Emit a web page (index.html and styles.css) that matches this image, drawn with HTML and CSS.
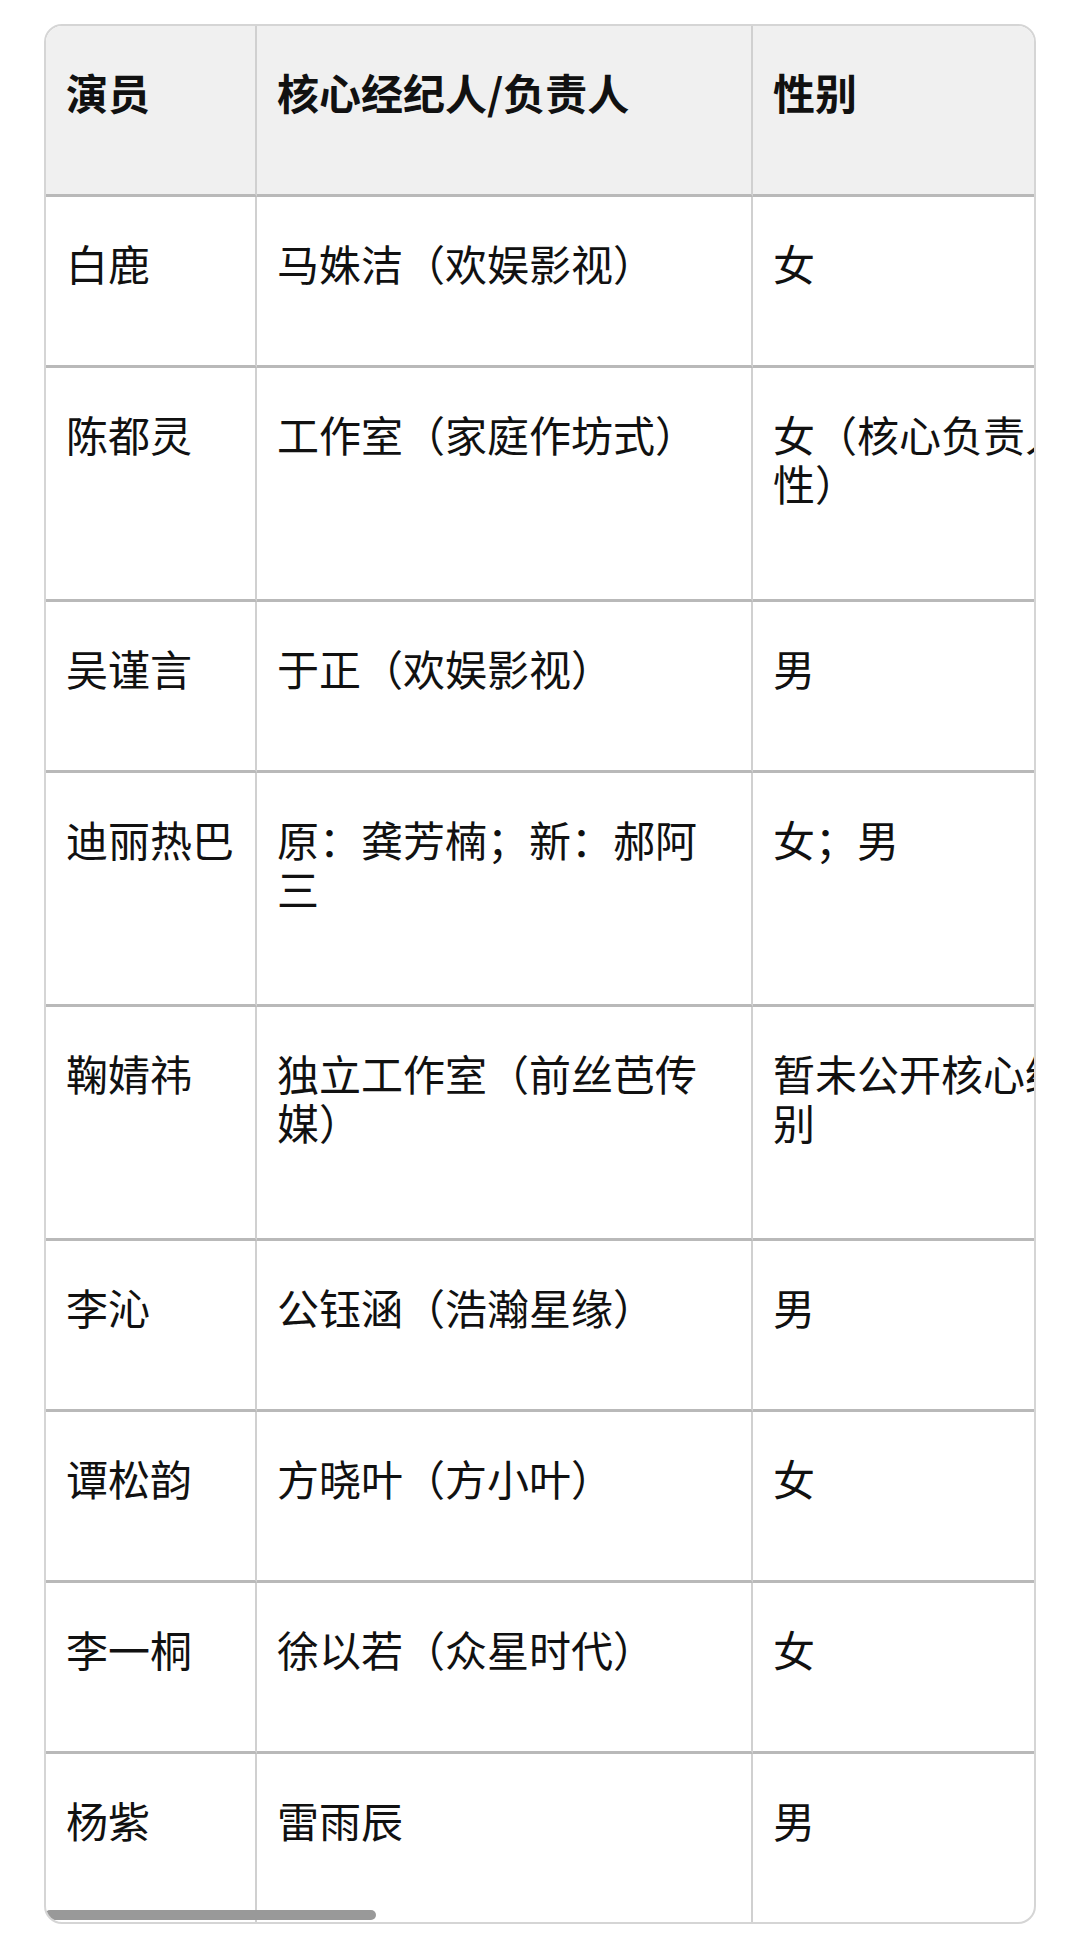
FILE: index.html
```html
<!DOCTYPE html>
<html lang="zh-CN">
<head>
<meta charset="utf-8">
<title>演员经纪人</title>
<link rel="stylesheet" href="styles.css">
</head>
<body>
<div class="table-wrap">
  <div class="table-scroll">
    <table class="data-table">
      <colgroup>
        <col class="col-actor">
        <col class="col-agent">
        <col class="col-gender">
      </colgroup>
      <thead>
        <tr><th>演员</th><th>核心经纪人/负责人</th><th>性别</th></tr>
      </thead>
      <tbody>
        <tr><td>白鹿</td><td>马姝洁（欢娱影视）</td><td>女</td></tr>
        <tr class="multi"><td>陈都灵</td><td>工作室（家庭作坊式）</td><td>女（核心负责人均为女性）</td></tr>
        <tr><td>吴谨言</td><td>于正（欢娱影视）</td><td>男</td></tr>
        <tr class="multi"><td>迪丽热巴</td><td>原：龚芳楠；新：郝阿三</td><td>女；男</td></tr>
        <tr class="multi"><td>鞠婧祎</td><td>独立工作室（前丝芭传媒）</td><td>暂未公开核心经纪人性别</td></tr>
        <tr><td>李沁</td><td>公钰涵（浩瀚星缘）</td><td>男</td></tr>
        <tr><td>谭松韵</td><td>方晓叶（方小叶）</td><td>女</td></tr>
        <tr><td>李一桐</td><td>徐以若（众星时代）</td><td>女</td></tr>
        <tr><td>杨紫</td><td>雷雨辰</td><td>男</td></tr>
      </tbody>
    </table>
  </div>
  <div class="scroll-thumb"></div>
</div>
</body>
</html>
```
FILE: styles.css
```css
html, body {
  margin: 0;
  background: #ffffff;
}

body {
  padding: 24px 44px 0 44px;
  font-family: "Noto Sans CJK SC", "Noto Sans", sans-serif;
  color: #111111;
}

.table-wrap {
  position: relative;
  border: 2px solid #d5d5d5;
  border-radius: 18px;
  overflow: hidden;
}

.table-scroll {
  overflow: hidden;
}

.data-table {
  border-collapse: separate;
  border-spacing: 0;
  table-layout: fixed;
  width: 1190px;
  font-size: 42px;
  line-height: 49px;
}

.col-actor { width: 211px; }
.col-agent { width: 496px; }
.col-gender { width: 483px; }

.data-table th,
.data-table td {
  padding: 41px 20px 78px 20px;
  text-align: left;
  vertical-align: top;
  border-right: 2px solid #d0d0d0;
  border-bottom: 3px solid #b9b9b9;
}

.data-table tr.multi td {
  padding-bottom: 92px;
}

.data-table th {
  background: #f0f0f0;
  font-weight: 700;
}

.data-table td {
  font-weight: 400;
}

.data-table tbody tr:last-child td {
  border-bottom: none;
}

.scroll-thumb {
  position: absolute;
  left: -1px;
  bottom: 2px;
  width: 331px;
  height: 10px;
  border-radius: 5px;
  background: #999999;
}
```
